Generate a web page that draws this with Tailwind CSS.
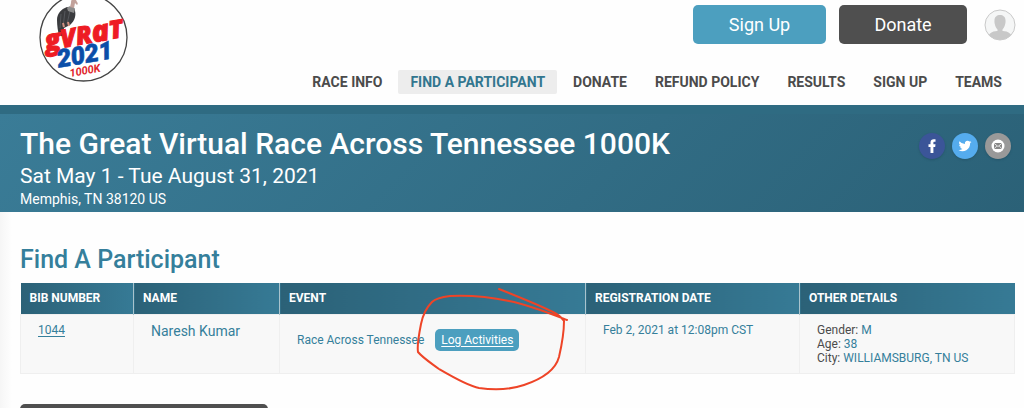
<!DOCTYPE html>
<html lang="en">
  <head>
    <meta charset="utf-8" />
    <meta name="viewport" content="width=device-width, initial-scale=1" />
    <title>The Great Virtual Race Across Tennessee 1000K</title>
    <script src="https://cdn.jsdelivr.net/npm/@tailwindcss/browser@4"></script>
  </head>

  <body class="bg-[#fefefe] font-['Roboto',sans-serif] text-[#4b4b4b]">
    <!-- Header -->
    <header class="flex justify-between pl-9">
      <a href="#" class="shrink-0" aria-label="GVRAT 2021 1000K">
        <svg class="block" width="96" height="84" viewBox="36 0 96 84">
          <circle cx="83.500" cy="37.500" r="43.500" fill="#fff" stroke="#444" stroke-width="1.300" />
          <!-- vulture -->
          <path d="M67 7C61 9 57 14 57 20C57 26 58 31 59 36L63 36L64 28L70 25C75 21 77 14 74 8Z" fill="#3a3b3e" />
          <path d="M61 14L60 28M65 11L63 27M70 11L67 24" stroke="#5c5e63" stroke-width="0.800" />
          <path d="M67 8C69 5 74 6 75 9L74 13L68 11Z" fill="#8b8b8b" />
          <path d="M70 7L71 3C71 0 72-2 75-2L77 2C78 3 78 4 77 5L75 3L74 8Z" fill="#c2a29b" />
          <path d="M63 23L64 27M68 22L69 26" stroke="#d09080" stroke-width="2" />
          <g transform="rotate(-10 84 40)" font-style="italic" font-weight="800">
            <text x="45" y="44" font-size="25" fill="#ee1c24" stroke="#ee1c24" font-family="Open Sans, sans-serif"><tspan font-size="28">g</tspan>VR<tspan font-size="29">a</tspan>T</text>
            <text x="54" y="63" font-size="25" font-weight="900" fill="#0a4ea8" stroke="#0a4ea8" stroke-width="0.600" font-family="Roboto, sans-serif">2021</text>
            <text x="64" y="74" font-size="11" fill="#e0252b" font-weight="700" font-family="Roboto, sans-serif">1000K</text>
          </g>
        </svg>
      </a>

      <div class="flex flex-col items-end">
        <div class="flex items-center pt-[5px] pr-2">
          <button type="button" class="h-[39px] w-[133px] rounded-[5px] bg-[#4c9fbf] text-lg text-white">Sign Up</button>
          <button type="button" class="ml-[13px] h-[39px] w-[128px] rounded-[5px] bg-[#4f4f4f] text-lg text-white">Donate</button>
          <button type="button" class="ml-[17px]" aria-label="Account">
            <svg class="block" width="32" height="32" viewBox="0 0 32 32">
              <clipPath id="avatar"><circle cx="16" cy="16" r="15" /></clipPath>
              <circle cx="16" cy="16" r="15" fill="#f5f6f6" />
              <g clip-path="url(#avatar)" fill="#c8c8c8">
                <path d="M10.500 11C10.500 8 13 6 16 6S21.500 8 21.500 11C22 15 20 19 18.500 20.500V22H13.500V20.500C12 19 10 15 10.500 11Z" />
                <path d="M3 32C3 25 8 22 13 22H19C24 22 29 25 29 32Z" />
              </g>
              <circle cx="16" cy="16" r="15" fill="none" stroke="#c9c9c9" />
            </svg>
          </button>
        </div>

        <nav class="mt-[26px] mr-[10px] mb-[11px] flex gap-1 text-sm leading-6 font-bold whitespace-nowrap">
          <a href="#" class="px-3">RACE INFO</a>
          <a href="#" class="rounded-xs bg-[#ededed] px-3 text-[#32768f]" aria-current="page">FIND A PARTICIPANT</a>
          <a href="#" class="px-3">DONATE</a>
          <a href="#" class="px-3">REFUND POLICY</a>
          <a href="#" class="px-3">RESULTS</a>
          <a href="#" class="px-3">SIGN UP</a>
          <a href="#" class="px-3">TEAMS</a>
        </nav>
      </div>
    </header>

    <!-- Race banner -->
    <section class="flex justify-between border-t-9 border-[#2f6b82] bg-linear-[135deg] from-[#3a7c97] to-[#2b6177] pr-[13px] pb-1 pl-5 text-white">
      <div class="pt-3">
        <h1 class="text-[30px] leading-9 font-medium">The Great Virtual Race Across Tennessee 1000K</h1>
        <p class="text-[21px] leading-7">Sat May 1 - Tue August 31, 2021</p>
        <p class="text-sm leading-[18px]">Memphis, TN 38120 US</p>
      </div>
      <div class="flex gap-[7px] pt-[19px]">
        <a href="#" class="size-[26px] rounded-full bg-[#3b5598] shadow-sm" aria-label="Facebook">
          <svg width="26" height="26" viewBox="0 0 26 26" fill="#fff">
            <path d="M11.500 20V14H9.500V11.200H11.500V9.500C11.500 7.200 12.800 6.200 14.800 6.200H16.500V8.800H15.300C14.600 8.800 14.400 9.200 14.400 9.800V11.200H16.500L16.200 14H14.400V20Z" />
          </svg>
        </a>
        <a href="#" class="size-[26px] rounded-full bg-[#55acee] shadow-sm" aria-label="Twitter">
          <svg width="26" height="26" viewBox="0 0 26 26">
            <path transform="translate(6.500 6.500) scale(.54)" fill="#fff" d="M24 4.600a10 10 0 0 1-2.800.8 5 5 0 0 0 2.200-2.700c-1 .6-2 1-3.100 1.200a4.900 4.900 0 0 0-8.400 4.500A14 14 0 0 1 1.700 3.200a4.900 4.900 0 0 0 1.500 6.500 5 5 0 0 1-2.200-.6 4.900 4.900 0 0 0 3.900 4.900 5 5 0 0 1-2.200.1 4.900 4.900 0 0 0 4.600 3.400A10 10 0 0 1 0 19.500a14 14 0 0 0 21.500-12.400A10 10 0 0 0 24 4.600z" />
          </svg>
        </a>
        <a href="#" class="size-[26px] rounded-full bg-[#999] shadow-sm" aria-label="Email">
          <svg width="26" height="26" viewBox="0 0 26 26">
            <circle cx="13" cy="13" r="6.500" fill="#fff" />
            <rect x="9" y="10" width="8" height="6" rx="0.500" fill="#888" />
            <path d="M9 10.300L13 13.500L17 10.300M9 15.800L11.800 13M17 15.800L14.200 13" fill="none" stroke="#fff" stroke-width="0.800" />
          </svg>
        </a>
      </div>
    </section>

    <!-- Participant -->
    <main class="bg-linear-to-r from-[#f6f6f6] to-[#fefefe] to-[12px] pt-8 pr-[9px] pl-5">
      <h2 class="text-[25px] leading-8 font-medium text-[#357f9b]">Find A Participant</h2>

      <table class="mt-[7px] w-full table-fixed border-collapse text-left align-top text-xs">
        <thead class="text-white">
          <tr class="h-[31px]">
            <th class="w-[113px] border-r border-[#a9c3cd] bg-linear-to-r from-[#2b6177] to-[#367a95] pl-[9px] font-bold">BIB NUMBER</th>
            <th class="w-[146px] border-r border-[#a9c3cd] bg-linear-to-r from-[#2b6177] to-[#367a95] pl-[9px] font-bold">NAME</th>
            <th class="w-[306px] border-r border-[#a9c3cd] bg-linear-to-r from-[#2b6177] to-[#367a95] pl-[9px] font-bold">EVENT</th>
            <th class="w-[214px] border-r border-[#a9c3cd] bg-linear-to-r from-[#2b6177] to-[#367a95] pl-[9px] font-bold">REGISTRATION DATE</th>
            <th class="bg-linear-to-r from-[#2b6177] to-[#367a95] pl-[9px] font-bold">OTHER DETAILS</th>
          </tr>
        </thead>
        <tbody class="bg-[#f8f8f8] text-[#357f9b]">
          <tr class="h-[59px] align-top">
            <td class="border border-[#efefef] pt-[7px] pl-[17px]"><a href="#" class="underline underline-offset-2">1044</a></td>
            <td class="border border-[#efefef] pt-[7px] pl-[17px] text-sm leading-[18px]">Naresh Kumar</td>
            <td class="border border-[#efefef] pt-[14px] pl-[17px]">
              <div class="relative flex items-center gap-[11px]">
                <span>Race Across Tennessee</span>
                <a href="#" class="rounded-[5px] bg-[#4c9fbf] px-[6px] leading-[22px] text-white underline underline-offset-2">Log Activities</a>
                <!-- pen circle round the button -->
                <svg class="pointer-events-none absolute top-[-45px] left-[116px]" width="160" height="110" viewBox="414 284 160 110" fill="none" stroke="#ee4427" stroke-width="2" stroke-linecap="round" stroke-linejoin="round">
                  <path d="M500 289C520 297 542 306 554 312C560 315 563 318 565 321C565 331 563 344 560 357C556 372 540 380 525 385C510 390 493 390 480 388C469 386 452 376 440 369C432 363 424 358 419 352C418 346 420 334 422 324C424 314 429 306 433 302C437 298 443 297 451 296C472 295 491 297 510 301C530 305 550 313 568 320" />
                </svg>
              </div>
            </td>
            <td class="border border-[#efefef] pt-[7px] pl-[17px]">Feb 2, 2021 at 12:08pm CST</td>
            <td class="border border-[#efefef] pt-[8px] pl-[17px] leading-[14px]">
              <p><span class="text-[#4b4b4b]">Gender:</span> M</p>
              <p><span class="text-[#4b4b4b]">Age:</span> 38</p>
              <p><span class="text-[#4b4b4b]">City:</span> WILLIAMSBURG, TN US</p>
            </td>
          </tr>
        </tbody>
      </table>

      <button type="button" class="mt-[30px] block h-10 w-[248px] rounded-[5px] bg-[#4f4f4f]" aria-label="Search again"></button>
    </main>
  </body>
</html>
